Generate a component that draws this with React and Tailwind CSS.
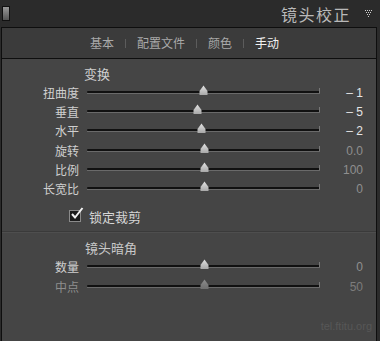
import React from 'react'

const FONT = { fontFamily: '"Noto Sans CJK SC", "Liberation Sans", sans-serif' }

const Thumb = ({ pos, dim }) => (
  <svg
    className="absolute top-[-6px]"
    style={{ left: pos - 5 }}
    width="11"
    height="11"
    viewBox="0 0 11 11"
  >
    <defs>
      <linearGradient id={dim ? 'thd' : 'th'} x1="0" y1="0" x2="0" y2="1">
        <stop offset="0" stopColor={dim ? '#8c8c8c' : '#e2e2e2'} />
        <stop offset="1" stopColor={dim ? '#6e6e6e' : '#a8a8a8'} />
      </linearGradient>
    </defs>
    <path d="M5.5 0.5 L9.5 6 L9.5 10 L1.5 10 L1.5 6 Z" fill={`url(#${dim ? 'thd' : 'th'})`} />
  </svg>
)

const Slider = ({ label, pos, value, bright, dim }) => (
  <div className="flex items-center h-[19.3px]">
    <div className={`w-[77px] text-right text-[12px] leading-none ${dim ? 'text-[#8e8e8e]' : 'text-[#cfcfcf]'}`}>
      {label}
    </div>
    <div className="relative ml-[8px] w-[233px] h-[4px]">
      <div className="h-[2px] bg-[#111] rounded-l-full" />
      <div className="h-[1px] bg-[#6a6a6a]" />
      <div className="absolute right-0 top-[-3px] w-[1px] h-[5px] bg-[#777]" />
      <Thumb pos={pos} dim={dim} />
    </div>
    <div
      className={`w-[43px] text-right text-[12px] leading-none ${bright ? 'text-[#e6e6e6]' : dim ? 'text-[#7c7c7c]' : 'text-[#8f8f8f]'}`}
      style={{ fontFamily: '"Liberation Sans", sans-serif' }}
    >
      {value}
    </div>
  </div>
)

const Tab = ({ children, active }) => (
  <span className={active ? 'text-[#f2f2f2]' : 'text-[#a9a9a9]'}>{children}</span>
)

const Sep = () => <span className="mx-[11px] w-[1px] h-[9px] bg-[#5c5c5c] inline-block" />

export default function App() {
  return (
    <div className="w-[380px] h-[341px] bg-[#2b2b2b] overflow-hidden flex flex-col" style={FONT}>
      {/* header */}
      <div className="h-[27px] flex items-center shrink-0">
        <div className="ml-[2px] w-[8px] h-[15px] border border-[#111] bg-gradient-to-b from-[#9a9a9a] to-[#555]" />
        <div className="ml-auto text-[16px] leading-none text-[#b9b9b9] tracking-[1.5px]">镜头校正</div>
        <svg className="ml-[14px] mr-[7px]" width="8" height="7" viewBox="0 0 8 7">
          <g fill="#d0d0d0">
            <rect x="0" y="0" width="1" height="1" />
            <rect x="2" y="0" width="1" height="1" />
            <rect x="4" y="0" width="1" height="1" />
            <rect x="6" y="0" width="1" height="1" />
            <rect x="1" y="2" width="1" height="1" />
            <rect x="3" y="2" width="1" height="1" />
            <rect x="5" y="2" width="1" height="1" />
            <rect x="2" y="4" width="1" height="1" />
            <rect x="4" y="4" width="1" height="1" />
            <rect x="3" y="6" width="1" height="1" />
          </g>
        </svg>
      </div>

      <div className="ml-[1px] w-[376px] flex-1 border border-b-0 border-[#0e0e0e] flex flex-col">
        {/* tabs */}
        <div className="h-[31px] bg-[#3b3b3b] flex items-center pl-[88px] text-[12px] leading-none border-b border-[#0e0e0e]">
          <Tab>基本</Tab>
          <Sep />
          <Tab>配置文件</Tab>
          <Sep />
          <Tab>颜色</Tab>
          <Sep />
          <Tab active>手动</Tab>
        </div>

        {/* content */}
        <div className="flex-1 bg-[#454545] flex flex-col">
          <div className="pl-[82px] pt-[8px] h-[24px] text-[13px] leading-none text-[#cfcfcf]">变换</div>
          <Slider label="扭曲度" pos={116} value="– 1" bright />
          <Slider label="垂直" pos={110} value="– 5" bright />
          <Slider label="水平" pos={114} value="– 2" bright />
          <Slider label="旋转" pos={117} value="0.0" />
          <Slider label="比例" pos={117} value="100" />
          <Slider label="长宽比" pos={117} value="0" />

          <div className="flex items-center h-[27px] pl-[67px] mt-[4px]">
            <div className="w-[12px] h-[12px] bg-[#1c1c1c] border border-[#8a8a8a] relative">
              <svg className="absolute left-[0px] top-[-4px]" width="14" height="14" viewBox="0 0 14 14">
                <path d="M2 7 L5 10.5 L12.5 1" stroke="#f2f2f2" strokeWidth="2" fill="none" />
              </svg>
            </div>
            <span className="ml-[8px] text-[13px] leading-none text-[#d6d6d6]">锁定裁剪</span>
          </div>

          <div className="mt-[1px] h-[1px] bg-[#3a3a3a] border-b border-[#4e4e4e] box-content" />

          <div className="pl-[83px] pt-[8px] h-[25px] text-[13px] leading-none text-[#c8c8c8]">镜头暗角</div>
          <Slider label="数量" pos={117} value="0" />
          <Slider label="中点" pos={117} value="50" dim />

          <div className="mt-auto mb-[9px] pr-[4px] text-right text-[11px] leading-none text-[#575757]" style={{ fontFamily: '"Liberation Sans", sans-serif' }}>
            tel.ftitu.org
          </div>
        </div>
      </div>
    </div>
  )
}
